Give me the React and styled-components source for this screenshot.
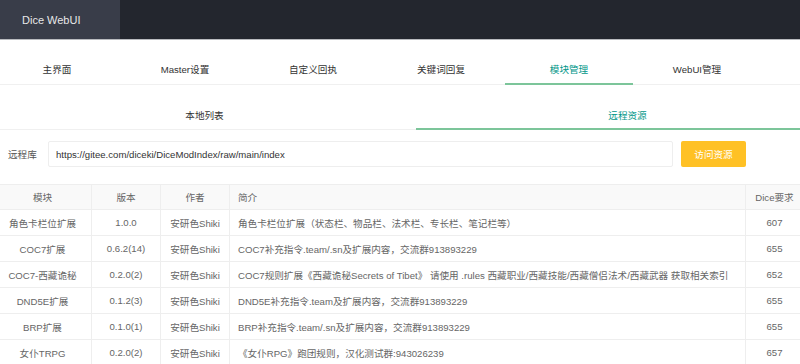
import React, { useState } from "react";
import styled, { createGlobalStyle } from "styled-components";

const GlobalStyle = createGlobalStyle`
  html, body {
    margin: 0;
    padding: 0;
    background: #ffffff;
    overflow: hidden;
  }
  body {
    font-family: "Liberation Sans", "Noto Sans CJK SC", sans-serif;
    font-size: 9.6px;
    color: #666666;
  }
`;

const mainTabs = ["主界面", "Master设置", "自定义回执", "关键词回复", "模块管理", "WebUI管理"];
const subTabs = ["本地列表", "远程资源"];

const mods = [
  { name: "角色卡栏位扩展", ver: "1.0.0", author: "安研色Shiki", brief: "角色卡栏位扩展（状态栏、物品栏、法术栏、专长栏、笔记栏等）", dice: 607 },
  { name: "COC7扩展", ver: "0.6.2(14)", author: "安研色Shiki", brief: "COC7补充指令.team/.sn及扩展内容，交流群913893229", dice: 655 },
  { name: "COC7-西藏诡秘", ver: "0.2.0(2)", author: "安研色Shiki", brief: "COC7规则扩展《西藏诡秘Secrets of Tibet》 请使用 .rules 西藏职业/西藏技能/西藏僧侣法术/西藏武器 获取相关索引", dice: 652 },
  { name: "DND5E扩展", ver: "0.1.2(3)", author: "安研色Shiki", brief: "DND5E补充指令.team及扩展内容，交流群913893229", dice: 655 },
  { name: "BRP扩展", ver: "0.1.0(1)", author: "安研色Shiki", brief: "BRP补充指令.team/.sn及扩展内容，交流群913893229", dice: 655 },
  { name: "女仆TRPG", ver: "0.2.0(2)", author: "安研色Shiki", brief: "《女仆RPG》跑团规则，汉化测试群:943026239", dice: 657 },
];

export default function App() {
  const [tab, setTab] = useState(4);
  const [sub, setSub] = useState(1);
  const [url, setUrl] = useState("https://gitee.com/diceki/DiceModIndex/raw/main/index");

  return (
    <>
      <GlobalStyle />
      <Header>
        <Logo>Dice WebUI</Logo>
      </Header>
      <Body>
        <TabBar>
          {mainTabs.map((t, i) => (
            <Tab key={t} width={128} active={i === tab} onClick={() => setTab(i)}>{t}</Tab>
          ))}
        </TabBar>
        <SubTabBar>
          {subTabs.map((t, i) => (
            <Tab key={t} width={423} active={i === sub} onClick={() => setSub(i)}>{t}</Tab>
          ))}
        </SubTabBar>
        <RemoteRow>
          <Label>远程库</Label>
          <UrlInput value={url} onChange={(e) => setUrl(e.target.value)} />
          <WarmButton>访问资源</WarmButton>
        </RemoteRow>
        <Table>
          <colgroup>
            <col style={{ width: 98 }} />
            <col style={{ width: 69 }} />
            <col style={{ width: 69 }} />
            <col style={{ width: 516 }} />
            <col style={{ width: 58 }} />
          </colgroup>
          <thead>
            <tr>
              <Th>模块</Th>
              <Th>版本</Th>
              <Th>作者</Th>
              <Th left>简介</Th>
              <Th>Dice要求</Th>
            </tr>
          </thead>
          <tbody>
            {mods.map((m) => (
              <tr key={m.name}>
                <Td>{m.name}</Td>
                <Td>{m.ver}</Td>
                <Td>{m.author}</Td>
                <Td left>{m.brief}</Td>
                <Td>{m.dice}</Td>
              </tr>
            ))}
          </tbody>
        </Table>
      </Body>
    </>
  );
}

const Header = styled.div`
    height: 39px;
    display: flex;
    background: #23262e;
    border-bottom: 1px solid #b9bbbf;
`

const Logo = styled.div`
    width: 120px;
    height: 39px;
    display: flex;
    align-items: center;
    padding-left: 22px;
    box-sizing: border-box;
    background: #393d49;
    color: #e8e8e8;
    font-size: 11px;
`

const Body = styled.div`
    width: 810px;
    margin-left: -7px;
    padding-top: 15px;
`

const TabBar = styled.div`
    display: flex;
    height: 29px;
    border-bottom: 1px solid #f0f0f0;
`

const SubTabBar = styled(TabBar)`
    margin-top: 16px;
    height: 28px;
`

const Tab = styled.div`
    width: ${(p) => p.width}px;
    flex: none;
    display: flex;
    align-items: center;
    justify-content: center;
    box-sizing: border-box;
    margin-bottom: -1px;
    color: ${(p) => (p.active ? "#009688" : "#333333")};
    border-bottom: 2px solid ${(p) => (p.active ? "#7cc59a" : "transparent")};
    cursor: pointer;
`

const RemoteRow = styled.div`
    display: flex;
    align-items: center;
    padding: 11px 0 0 15px;
    height: 26px;
`

const Label = styled.span`
    width: 40px;
    color: #555555;
`

const UrlInput = styled.input`
    width: 625px;
    height: 26px;
    box-sizing: border-box;
    padding: 0 7px;
    border: 1px solid #eeeeee;
    border-radius: 2px;
    font-family: inherit;
    font-size: 9.6px;
    color: #333333;
    outline: none;
`

const WarmButton = styled.button`
    margin-left: 8px;
    width: 65px;
    height: 26px;
    border: none;
    border-radius: 2px;
    background: #ffc125;
    color: #ffffff;
    font-family: inherit;
    font-size: 9.6px;
`

const Table = styled.table`
    margin-top: 17px;
    width: 810px;
    table-layout: fixed;
    border-collapse: collapse;
    border-top: 1px solid #eeeeee;
`

const Th = styled.th`
    height: 25px;
    padding: 0 8px;
    box-sizing: border-box;
    background: #f9f9f9;
    border: 1px solid #eeeeee;
    font-weight: normal;
    color: #666666;
    text-align: ${(p) => (p.left ? "left" : "center")};
    white-space: nowrap;
`

const Td = styled.td`
    height: 26px;
    padding: 0 8px;
    box-sizing: border-box;
    border: 1px solid #eeeeee;
    color: #666666;
    text-align: ${(p) => (p.left ? "left" : "center")};
    white-space: nowrap;
    overflow: hidden;
`
